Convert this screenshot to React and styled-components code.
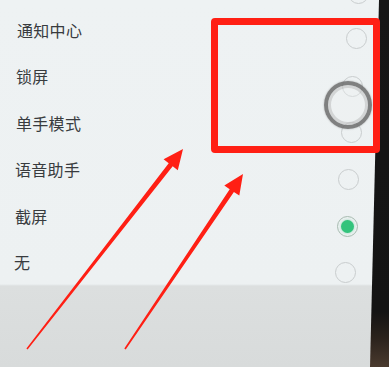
import styled, { createGlobalStyle } from 'styled-components';

const Global = createGlobalStyle`
  html, body { margin: 0; padding: 0; background: #eef2f3; }
  body { overflow: hidden; }
`;

const Page = styled.div`
  position: relative;
  width: 389px;
  height: 367px;
  overflow: hidden;
  display: flex;
  background: linear-gradient(to bottom, #eef2f3 0, #edf1f2 284px, #dcdfdf 286px, #d8dbdb 100%);
  font-family: "Noto Sans CJK SC", "Noto Sans", sans-serif;
`;

const Screen = styled.div`
  flex: 1;
  display: flex;
  flex-direction: column;
`;

const List = styled.div`
  margin-top: -40px;
  display: flex;
  flex-direction: column;
`;

const Row = styled.div`
  height: 46.5px;
  box-sizing: border-box;
  display: flex;
  align-items: flex-start;
  justify-content: space-between;
  padding: 13px ${p => p.right}px 0 ${p => p.left}px;
`;

const Label = styled.span`
  font-size: 16px;
  line-height: 20px;
  color: #383b3e;
  letter-spacing: 0.3px;
`;

const Radio = styled.span`
  margin-top: ${p => p.drop}px;
  width: 21px;
  height: 21px;
  box-sizing: border-box;
  border-radius: 50%;
  border: 1.5px solid ${p => (p.on ? '#a8bcb1' : '#c9cdce')};
  display: flex;
  align-items: center;
  justify-content: center;
  &::after {
    content: '';
    display: ${p => (p.on ? 'block' : 'none')};
    width: 13px;
    height: 13px;
    border-radius: 50%;
    background: #33c37c;
    box-shadow: 0 0 3px rgba(51, 195, 124, 0.5);
  }
`;

const Footer = styled.div`
  flex: 1;
`;

const Bezel = styled.div`
  width: 19px;
  background: linear-gradient(to bottom, #161616 0, #141414 85%, #2a221c 92%, #4a3a2e 100%);
  clip-path: polygon(9px 0, 100% 0, 100% 100%, 0 100%);
`;

const FloatBall = styled.div`
  position: absolute;
  left: 324px;
  top: 81px;
  width: 48px;
  height: 48px;
  box-sizing: border-box;
  border-radius: 50%;
  border: 4px solid rgba(85, 85, 85, 0.72);
  background: rgba(238, 241, 242, 0.35);
  box-shadow: inset 0 0 0 3px rgba(160, 160, 160, 0.35), 0 0 2px rgba(80, 80, 80, 0.4);
`;

const Frame = styled.div`
  position: absolute;
  left: 211px;
  top: 18px;
  width: 169px;
  height: 135px;
  box-sizing: border-box;
  border: 7px solid #ff1f14;
  border-radius: 4px;
`;

const Arrows = styled.svg`
  position: absolute;
  left: 0;
  top: 0;
  pointer-events: none;
`;

const rows = [
  { label: '', left: 17, right: 1, drop: 10 },
  { label: '通知中心', left: 17, right: 3, drop: 8 },
  { label: '锁屏', left: 16, right: 7, drop: 10 },
  { label: '单手模式', left: 16, right: 8, drop: 9 },
  { label: '语音助手', left: 15, right: 11, drop: 10 },
  { label: '截屏', left: 15, right: 12, drop: 10, on: true },
  { label: '无', left: 14, right: 14, drop: 10 },
];

export default function App() {
  return (
    <>
      <Global />
      <Page>
        <Screen>
          <List>
            {rows.map((r, i) => (
              <Row key={i} left={r.left} right={r.right}>
                <Label>{r.label}</Label>
                <Radio drop={r.drop} on={r.on} />
              </Row>
            ))}
          </List>
          <Footer />
        </Screen>
        <Bezel />
        <FloatBall />
        <Frame />
        <Arrows width="389" height="367" viewBox="0 0 389 367">
          <polygon
            fill="#ff1f14"
            points="26.4,348.5 168.7,163.3 163.6,159.3 183,149 177.8,170.3 172.7,166.3 27.6,349.5"
          />
          <polygon
            fill="#ff1f14"
            points="124.3,348.6 229.7,189.2 224.3,185.6 243,174 239.3,195.6 233.9,192 125.7,349.4"
          />
        </Arrows>
      </Page>
    </>
  );
}
